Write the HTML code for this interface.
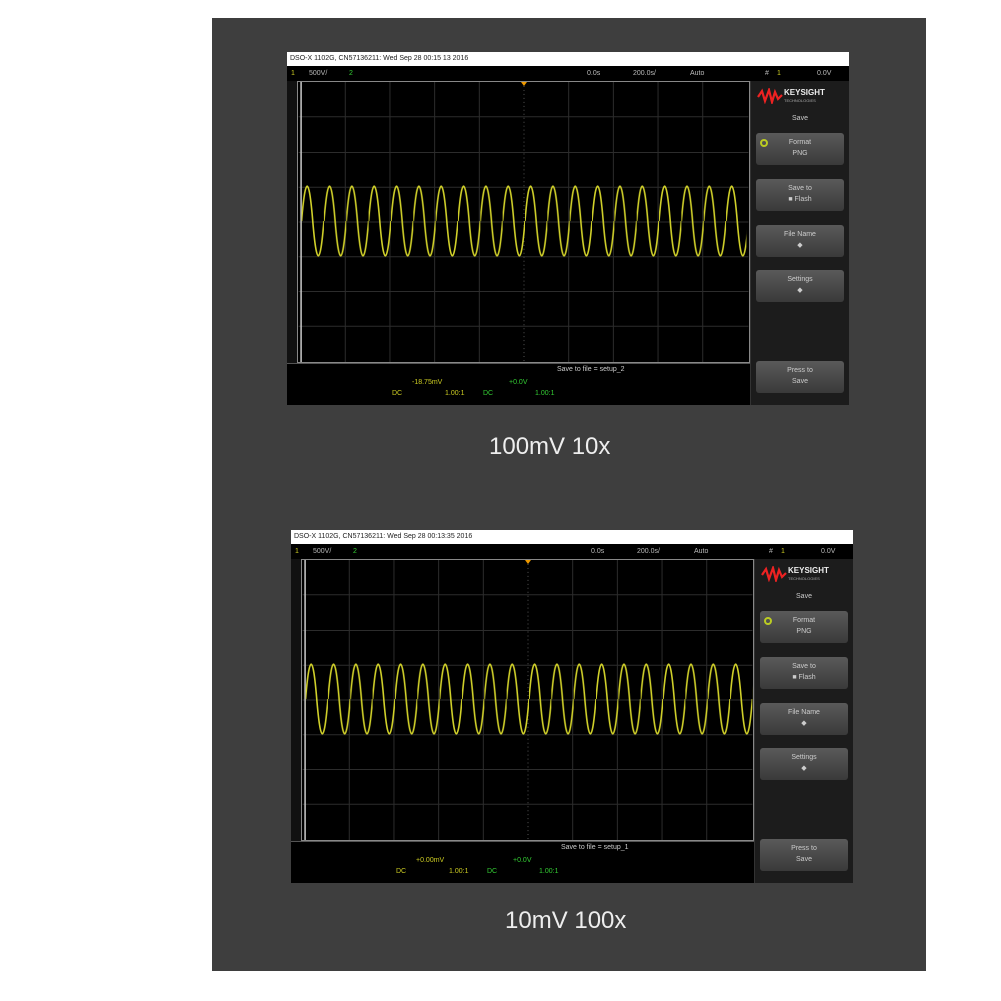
<!DOCTYPE html>
<html><head><meta charset="utf-8"><style>
body{margin:0;width:1001px;height:1001px;background:#fff;position:relative;overflow:hidden;font-family:"Liberation Sans",sans-serif}
.panel{position:absolute;left:212px;top:18px;width:714px;height:953px;background:#3e3e3e}
.scope{position:absolute;width:562px;height:353px;background:#111}
.scope *{position:absolute;box-sizing:border-box}
.title{left:0;top:0;width:562px;height:14px;background:#fff;color:#222;font-size:7px;line-height:14px;padding-left:3px;white-space:nowrap}
.status{left:0;top:14px;width:562px;height:15px;background:#000;color:#bbb;font-size:7px;line-height:15px}
.grid{left:10px;top:29px;width:453px;height:282px;background:#000;border:1px solid #888}
.side{left:463px;top:29px;width:99px;height:324px;background:#1c1c1c;border-left:1px solid #333}
.btn{left:5px;width:88px;height:32px;background:linear-gradient(#5a5a5a,#3a3a3a);border-radius:3px;color:#ccc;font-size:7px;text-align:center;line-height:11px;padding-top:4px}
.bottom{left:0;top:311px;width:463px;height:42px;background:#000;border-top:1px solid #555;font-size:7px;color:#ccc}
.cap{position:absolute;color:#eee;font-size:24px;white-space:nowrap}
</style></head><body>
<div class="panel"></div>

<div class="scope" style="left:287px;top:52px">
<div class="title">DSO-X 1102G, CN57136211: Wed Sep 28 00:15 13 2016</div>
<div class="status"><span style="position:absolute;left:4px;color:#cc2">1</span><span style="position:absolute;left:22px">500V/</span><span style="position:absolute;left:62px;color:#3c3">2</span><span style="position:absolute;left:300px">0.0s</span><span style="position:absolute;left:346px">200.0s/</span><span style="position:absolute;left:403px">Auto</span><span style="position:absolute;left:478px">#</span><span style="position:absolute;left:490px;color:#cc2">1</span><span style="position:absolute;left:530px">0.0V</span></div>
<svg class="grid" width="453" height="282" viewBox="0 0 453 282" style="padding:0">
<defs><pattern id="w" x="3" y="0" width="22.5" height="282" patternUnits="userSpaceOnUse"><path d="M0,140 C3.9,93.3 7.35,93.3 11.25,140 C15.15,186.7 18.6,186.7 22.5,140" fill="none" stroke="#d2d22a" stroke-width="1.6"/></pattern></defs>
<g stroke="#2c2c2c" stroke-width="1">
<line x1="47" y1="0" x2="47" y2="282"/><line x1="92" y1="0" x2="92" y2="282"/><line x1="137" y1="0" x2="137" y2="282"/><line x1="182" y1="0" x2="182" y2="282"/><line x1="272" y1="0" x2="272" y2="282"/><line x1="317" y1="0" x2="317" y2="282"/><line x1="362" y1="0" x2="362" y2="282"/><line x1="407" y1="0" x2="407" y2="282"/>
<line x1="0" y1="35" x2="453" y2="35"/><line x1="0" y1="71" x2="453" y2="71"/><line x1="0" y1="106" x2="453" y2="106"/><line x1="0" y1="141" x2="453" y2="141"/><line x1="0" y1="176" x2="453" y2="176"/><line x1="0" y1="211" x2="453" y2="211"/><line x1="0" y1="246" x2="453" y2="246"/>
</g>
<line x1="227" y1="0" x2="227" y2="282" stroke="#555" stroke-dasharray="1,3"/>
<line x1="2.5" y1="0" x2="2.5" y2="282" stroke="#ccc" stroke-width="1.5"/>
<rect x="3" y="0" width="448" height="282" fill="url(#w)"/>
<path d="M224,0 L230,0 L227,4Z" fill="#e90"/>
</svg>
<div class="side">
<svg style="left:6px;top:7px" width="26" height="16" viewBox="0 0 26 16"><path d="M1,9 L5,3 L8,13 L12,2 L15,14 L18,4 L21,11 L25,7" fill="none" stroke="#e22" stroke-width="2.2"/></svg>
<div style="left:33px;top:7px;color:#eee;font-size:8px;font-weight:bold">KEYSIGHT</div>
<div style="left:33px;top:17px;color:#aaa;font-size:4px">TECHNOLOGIES</div>
<div style="left:0;width:98px;top:34px;text-align:center;color:#ccc;font-size:7px">Save</div>
<div class="btn" style="top:52px"><span style="position:absolute;left:4px;top:6px;width:8px;height:8px;border-radius:50%;border:2px solid #bc2"></span>Format<br>PNG</div>
<div class="btn" style="top:98px">Save to<br>■ Flash</div>
<div class="btn" style="top:144px">File Name<br>◆</div>
<div class="btn" style="top:189px">Settings<br>◆</div>
<div class="btn" style="top:280px">Press to<br>Save</div>
</div>
<div class="bottom"><span style="position:absolute;left:270px;top:2px">Save to file = setup_2</span>
<span style="position:absolute;left:125px;top:15px;color:#cc2">-18.75mV</span><span style="position:absolute;left:222px;top:15px;color:#3c3">+0.0V</span>
<span style="position:absolute;left:105px;top:26px;color:#cc2">DC</span><span style="position:absolute;left:158px;top:26px;color:#cc2">1.00:1</span><span style="position:absolute;left:196px;top:26px;color:#3c3">DC</span><span style="position:absolute;left:248px;top:26px;color:#3c3">1.00:1</span></div>
</div>
<div class="cap" style="left:489px;top:433px">100mV 10x</div>

<div class="scope" style="left:291px;top:530px">
<div class="title">DSO-X 1102G, CN57136211: Wed Sep 28 00:13:35 2016</div>
<div class="status"><span style="position:absolute;left:4px;color:#cc2">1</span><span style="position:absolute;left:22px">500V/</span><span style="position:absolute;left:62px;color:#3c3">2</span><span style="position:absolute;left:300px">0.0s</span><span style="position:absolute;left:346px">200.0s/</span><span style="position:absolute;left:403px">Auto</span><span style="position:absolute;left:478px">#</span><span style="position:absolute;left:490px;color:#cc2">1</span><span style="position:absolute;left:530px">0.0V</span></div>
<svg class="grid" width="453" height="282" viewBox="0 0 453 282" style="padding:0">
<defs><pattern id="w2" x="3" y="0" width="22.5" height="282" patternUnits="userSpaceOnUse"><path d="M0,140 C3.9,93.3 7.35,93.3 11.25,140 C15.15,186.7 18.6,186.7 22.5,140" fill="none" stroke="#d2d22a" stroke-width="1.6"/></pattern></defs>
<g stroke="#2c2c2c" stroke-width="1">
<line x1="47" y1="0" x2="47" y2="282"/><line x1="92" y1="0" x2="92" y2="282"/><line x1="137" y1="0" x2="137" y2="282"/><line x1="182" y1="0" x2="182" y2="282"/><line x1="272" y1="0" x2="272" y2="282"/><line x1="317" y1="0" x2="317" y2="282"/><line x1="362" y1="0" x2="362" y2="282"/><line x1="407" y1="0" x2="407" y2="282"/>
<line x1="0" y1="35" x2="453" y2="35"/><line x1="0" y1="71" x2="453" y2="71"/><line x1="0" y1="106" x2="453" y2="106"/><line x1="0" y1="141" x2="453" y2="141"/><line x1="0" y1="176" x2="453" y2="176"/><line x1="0" y1="211" x2="453" y2="211"/><line x1="0" y1="246" x2="453" y2="246"/>
</g>
<line x1="227" y1="0" x2="227" y2="282" stroke="#555" stroke-dasharray="1,3"/>
<line x1="2.5" y1="0" x2="2.5" y2="282" stroke="#ccc" stroke-width="1.5"/>
<rect x="3" y="0" width="450" height="282" fill="url(#w2)"/>
<path d="M224,0 L230,0 L227,4Z" fill="#e90"/>
</svg>
<div class="side">
<svg style="left:6px;top:7px" width="26" height="16" viewBox="0 0 26 16"><path d="M1,9 L5,3 L8,13 L12,2 L15,14 L18,4 L21,11 L25,7" fill="none" stroke="#e22" stroke-width="2.2"/></svg>
<div style="left:33px;top:7px;color:#eee;font-size:8px;font-weight:bold">KEYSIGHT</div>
<div style="left:33px;top:17px;color:#aaa;font-size:4px">TECHNOLOGIES</div>
<div style="left:0;width:98px;top:34px;text-align:center;color:#ccc;font-size:7px">Save</div>
<div class="btn" style="top:52px"><span style="position:absolute;left:4px;top:6px;width:8px;height:8px;border-radius:50%;border:2px solid #bc2"></span>Format<br>PNG</div>
<div class="btn" style="top:98px">Save to<br>■ Flash</div>
<div class="btn" style="top:144px">File Name<br>◆</div>
<div class="btn" style="top:189px">Settings<br>◆</div>
<div class="btn" style="top:280px">Press to<br>Save</div>
</div>
<div class="bottom"><span style="position:absolute;left:270px;top:2px">Save to file = setup_1</span>
<span style="position:absolute;left:125px;top:15px;color:#cc2">+0.00mV</span><span style="position:absolute;left:222px;top:15px;color:#3c3">+0.0V</span>
<span style="position:absolute;left:105px;top:26px;color:#cc2">DC</span><span style="position:absolute;left:158px;top:26px;color:#cc2">1.00:1</span><span style="position:absolute;left:196px;top:26px;color:#3c3">DC</span><span style="position:absolute;left:248px;top:26px;color:#3c3">1.00:1</span></div>
</div>
<div class="cap" style="left:505px;top:907px">10mV 100x</div>
</body></html>
